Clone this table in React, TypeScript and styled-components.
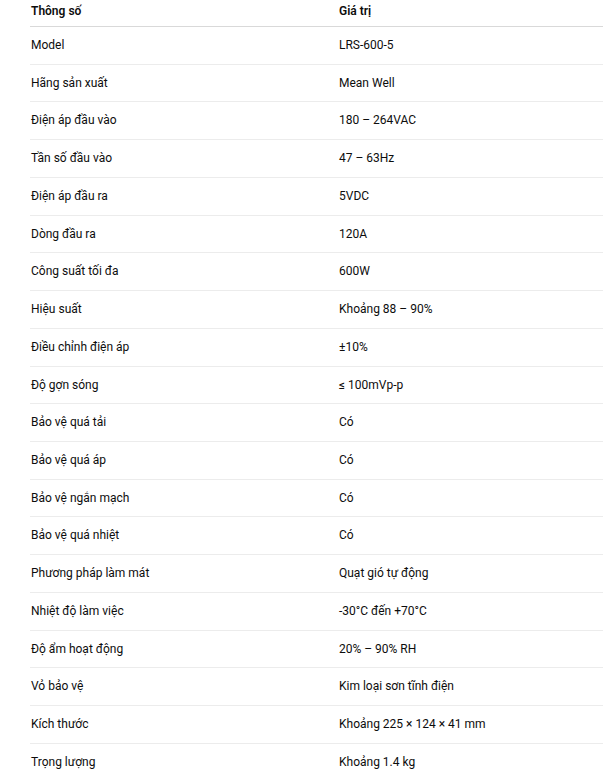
import React from "react";
import styled, { createGlobalStyle } from "styled-components";

const Global = createGlobalStyle`
  html, body { margin: 0; padding: 0; background: #ffffff; }
  body { font-family: Roboto, "Open Sans", Arial, sans-serif; color: #0d0d0d; }
`;

const Wrap = styled.div`
  padding: 0 0 0 30px;
  overflow: hidden;
`;

const Table = styled.table`
  width: 590px;
  border-collapse: collapse;
  font-size: 12px;
  line-height: 18.74px;
  table-layout: fixed;
`;

const Th = styled.th<{ $first?: boolean }>`
  text-align: left;
  font-weight: 600;
  padding: 1.6px 8px 5.6px ${(p) => (p.$first ? "1px" : "9px")};
  border-bottom: 1px solid #d9d9d9;
  width: ${(p) => (p.$first ? "291px" : "auto")};
`;

const Td = styled.td<{ $first?: boolean }>`
  padding: 9px 8px 9px ${(p) => (p.$first ? "1px" : "9px")};
  border-bottom: 1px solid #ececec;
  white-space: nowrap;
`;

const LastTd = styled(Td)`
  border-bottom: none;
`;

const rows: [string, string][] = [
  ["Model", "LRS-600-5"],
  ["Hãng sản xuất", "Mean Well"],
  ["Điện áp đầu vào", "180 – 264VAC"],
  ["Tần số đầu vào", "47 – 63Hz"],
  ["Điện áp đầu ra", "5VDC"],
  ["Dòng đầu ra", "120A"],
  ["Công suất tối đa", "600W"],
  ["Hiệu suất", "Khoảng 88 – 90%"],
  ["Điều chỉnh điện áp", "±10%"],
  ["Độ gợn sóng", "≤ 100mVp-p"],
  ["Bảo vệ quá tải", "Có"],
  ["Bảo vệ quá áp", "Có"],
  ["Bảo vệ ngắn mạch", "Có"],
  ["Bảo vệ quá nhiệt", "Có"],
  ["Phương pháp làm mát", "Quạt gió tự động"],
  ["Nhiệt độ làm việc", "-30°C đến +70°C"],
  ["Độ ẩm hoạt động", "20% – 90% RH"],
  ["Vỏ bảo vệ", "Kim loại sơn tĩnh điện"],
  ["Kích thước", "Khoảng 225 × 124 × 41 mm"],
  ["Trọng lượng", "Khoảng 1.4 kg"],
];

export default function App() {
  return (
    <>
      <Global />
      <Wrap>
        <Table>
          <thead>
            <tr>
              <Th $first>Thông số</Th>
              <Th>Giá trị</Th>
            </tr>
          </thead>
          <tbody>
            {rows.map(([k, v], i) => {
              const C = i === rows.length - 1 ? LastTd : Td;
              return (
                <tr key={k}>
                  <C $first>{k}</C>
                  <C>{v}</C>
                </tr>
              );
            })}
          </tbody>
        </Table>
      </Wrap>
    </>
  );
}
